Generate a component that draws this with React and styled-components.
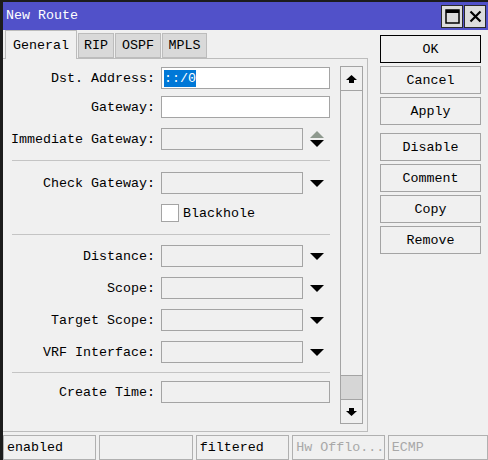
import React from "react";
import styled, { createGlobalStyle } from "styled-components";

const Global = createGlobalStyle`
  html, body { margin: 0; padding: 0; background: #f0f0f0; }
  body { font-family: "Liberation Mono", "DejaVu Sans Mono", monospace; font-size: 13.33px; color: #000; }
`;

const Window = styled.div`
  width: 488px;
  height: 460px;
  box-sizing: border-box;
  border-left: 3px solid #1c1c1c;
  border-top: 2px solid #1c1c1c;
  background: #f0f0f0;
  display: flex;
  flex-direction: column;
  overflow: hidden;
`;

const TitleBar = styled.div`
  height: 28px;
  background: #5151c9;
  display: flex;
  align-items: center;
  padding-left: 3px;
  padding-right: 2px;
  color: #fff;
`;

const Title = styled.div`
  flex: 1;
  font-size: 13.33px;
  line-height: 28px;
`;

const TitleButton = styled.div`
  width: 22px;
  height: 23px;
  box-sizing: border-box;
  margin-left: 1px;
  border: 1px solid #2a2a2a;
  background: #dcdcdc;
  display: flex;
  align-items: center;
  justify-content: center;
`;

const Body = styled.div`
  display: flex;
  height: 402px;
`;

const LeftCol = styled.div`
  width: 365px;
  display: flex;
  flex-direction: column;
`;

const Tabs = styled.div`
  display: flex;
  align-items: flex-end;
  height: 28px;
  padding-left: 2px;
`;

const Tab = styled.div`
  box-sizing: border-box;
  height: ${(p) => (p.$active ? 29 : 25)}px;
  width: ${(p) => p.$w}px;
  margin-bottom: ${(p) => (p.$active ? -1 : 0)}px;
  margin-right: 1px;
  background: ${(p) => (p.$active ? "#f0f0f0" : "#d9d9d9")};
  border: 1px solid #bcbcbc;
  border-bottom: ${(p) => (p.$active ? "none" : "1px solid #bcbcbc")};
  display: flex;
  align-items: center;
  justify-content: center;
  position: relative;
  z-index: ${(p) => (p.$active ? 1 : 0)};
`;

const Panel = styled.div`
  flex: 1;
  box-sizing: border-box;
  border-top: 1px solid #bcbcbc;
  border-right: 1px solid #bcbcbc;
  border-bottom: 1px solid #bcbcbc;
  display: flex;
`;

const Form = styled.div`
  width: 334px;
  padding-top: 8px;
  display: flex;
  flex-direction: column;
`;

const Row = styled.div`
  display: flex;
  align-items: center;
  height: ${(p) => p.$h || 22}px;
  margin-top: ${(p) => p.$mt || 0}px;
`;

const Label = styled.div`
  width: 152px;
  margin-right: 6px;
  text-align: right;
  white-space: nowrap;
`;

const Field = styled.div`
  box-sizing: border-box;
  height: 22px;
  width: ${(p) => (p.$short ? 142 : 169)}px;
  border: 1px solid #a4a4a4;
  background: ${(p) => (p.$disabled ? "#f0f0f0" : "#fff")};
  display: flex;
  align-items: center;
  padding-left: 2px;
`;

const Selected = styled.span`
  background: #0078d7;
  color: #fff;
  line-height: 17px;
`;

const ArrowBox = styled.div`
  width: 27px;
  height: 22px;
  display: flex;
  flex-direction: column;
  align-items: center;
  justify-content: center;
  gap: 2px;
`;

const Separator = styled.div`
  height: 1px;
  background: #c4c4c4;
  margin: ${(p) => p.$mt}px 0 0 9px;
  width: 318px;
`;

const Check = styled.div`
  box-sizing: border-box;
  width: 18px;
  height: 18px;
  border: 1px solid #a4a4a4;
  background: #fff;
  margin-right: 4px;
`;

const Scroll = styled.div`
  box-sizing: border-box;
  width: 23px;
  margin: 7px 0 7px 3px;
  border: 1px solid #a4a4a4;
  display: flex;
  flex-direction: column;
`;

const ScrollBtn = styled.div`
  height: 23px;
  display: flex;
  align-items: center;
  justify-content: center;
  border-top: ${(p) => (p.$down ? "1px solid #a4a4a4" : "none")};
  border-bottom: ${(p) => (p.$down ? "none" : "1px solid #a4a4a4")};
`;

const Track = styled.div`
  flex: 1;
`;

const Thumb = styled.div`
  height: 23px;
  background: #d6d6d6;
  border-top: 1px solid #a4a4a4;
`;

const RightCol = styled.div`
  width: 101px;
  margin-left: 12px;
  padding-top: 5px;
  display: flex;
  flex-direction: column;
`;

const Button = styled.div`
  box-sizing: border-box;
  height: 28px;
  margin-top: ${(p) => p.$mt || 0}px;
  border: 1px solid ${(p) => (p.$primary ? "#000" : "#a4a4a4")};
  background: #f0f0f0;
  display: flex;
  align-items: center;
  justify-content: center;
`;

const StatusBar = styled.div`
  display: flex;
  padding-top: 3px;
  gap: 3px;
`;

const Cell = styled.div`
  box-sizing: border-box;
  width: ${(p) => p.$w}px;
  height: 25px;
  border: 1px solid #b0b0b0;
  color: ${(p) => (p.$dim ? "#a8a8a8" : "#000")};
  display: flex;
  align-items: center;
  padding-left: 3px;
  white-space: nowrap;
  overflow: hidden;
`;

const Down = ({ color = "#000" }) => (
  <svg width="14" height="7" viewBox="0 0 14 7"><polygon points="0,0 14,0 7,7" fill={color} /></svg>
);
const Up = ({ color = "#000" }) => (
  <svg width="14" height="7" viewBox="0 0 14 7"><polygon points="0,7 14,7 7,0" fill={color} /></svg>
);
const ScrollArrow = ({ down }) => (
  <svg width="11" height="8" viewBox="0 0 11 8" style={{ transform: down ? "rotate(180deg)" : "none" }}>
    <polygon points="5.5,0 11,5 8,5 8,8 3,8 3,5 0,5" fill="#000" />
  </svg>
);

const FieldRow = ({ label, mt, short, disabled, arrow, children }) => (
  <Row $mt={mt}>
    <Label>{label}</Label>
    <Field $short={short} $disabled={disabled}>{children}</Field>
    {arrow === "down" && <ArrowBox><Down /></ArrowBox>}
    {arrow === "updown" && <ArrowBox><Up color="#8e998e" /><Down /></ArrowBox>}
  </Row>
);

export default function App() {
  return (
    <>
      <Global />
      <Window>
        <TitleBar>
          <Title>New Route</Title>
          <TitleButton>
            <svg width="15" height="15" viewBox="0 0 15 15">
              <rect x="1" y="1" width="13" height="13" fill="none" stroke="#000" strokeWidth="1.5" />
              <rect x="1" y="1" width="13" height="3" fill="#000" />
            </svg>
          </TitleButton>
          <TitleButton>
            <svg width="13" height="13" viewBox="0 0 13 13">
              <path d="M1.5 1.5 L11.5 11.5 M11.5 1.5 L1.5 11.5" stroke="#000" strokeWidth="2.2" />
            </svg>
          </TitleButton>
        </TitleBar>
        <Body>
          <LeftCol>
            <Tabs>
              <Tab $active $w={72}>General</Tab>
              <Tab $w={36}>RIP</Tab>
              <Tab $w={46}>OSPF</Tab>
              <Tab $w={45}>MPLS</Tab>
            </Tabs>
            <Panel>
              <Form>
                <FieldRow label="Dst. Address:"><Selected>::/0</Selected></FieldRow>
                <FieldRow label="Gateway:" mt={7} />
                <FieldRow label="Immediate Gateway:" mt={10} short disabled arrow="updown" />
                <Separator $mt={10} />
                <FieldRow label="Check Gateway:" mt={11} short disabled arrow="down" />
                <Row $mt={10} $h={18}>
                  <Label />
                  <Check />
                  <span>Blackhole</span>
                </Row>
                <Separator $mt={12} />
                <FieldRow label="Distance:" mt={10} short disabled arrow="down" />
                <FieldRow label="Scope:" mt={10} short disabled arrow="down" />
                <FieldRow label="Target Scope:" mt={10} short disabled arrow="down" />
                <FieldRow label="VRF Interface:" mt={10} short disabled arrow="down" />
                <Separator $mt={9} />
                <FieldRow label="Create Time:" mt={8} disabled />
              </Form>
              <Scroll>
                <ScrollBtn><ScrollArrow /></ScrollBtn>
                <Track />
                <Thumb />
                <ScrollBtn $down><ScrollArrow down /></ScrollBtn>
              </Scroll>
            </Panel>
          </LeftCol>
          <RightCol>
            <Button $primary>OK</Button>
            <Button $mt={3}>Cancel</Button>
            <Button $mt={3}>Apply</Button>
            <Button $mt={8}>Disable</Button>
            <Button $mt={3}>Comment</Button>
            <Button $mt={3}>Copy</Button>
            <Button $mt={3}>Remove</Button>
          </RightCol>
        </Body>
        <StatusBar>
          <Cell $w={94}>enabled</Cell>
          <Cell $w={94} />
          <Cell $w={94}>filtered</Cell>
          <Cell $w={93} $dim>Hw Offlo...</Cell>
          <Cell $w={101} $dim>ECMP</Cell>
        </StatusBar>
      </Window>
    </>
  );
}
